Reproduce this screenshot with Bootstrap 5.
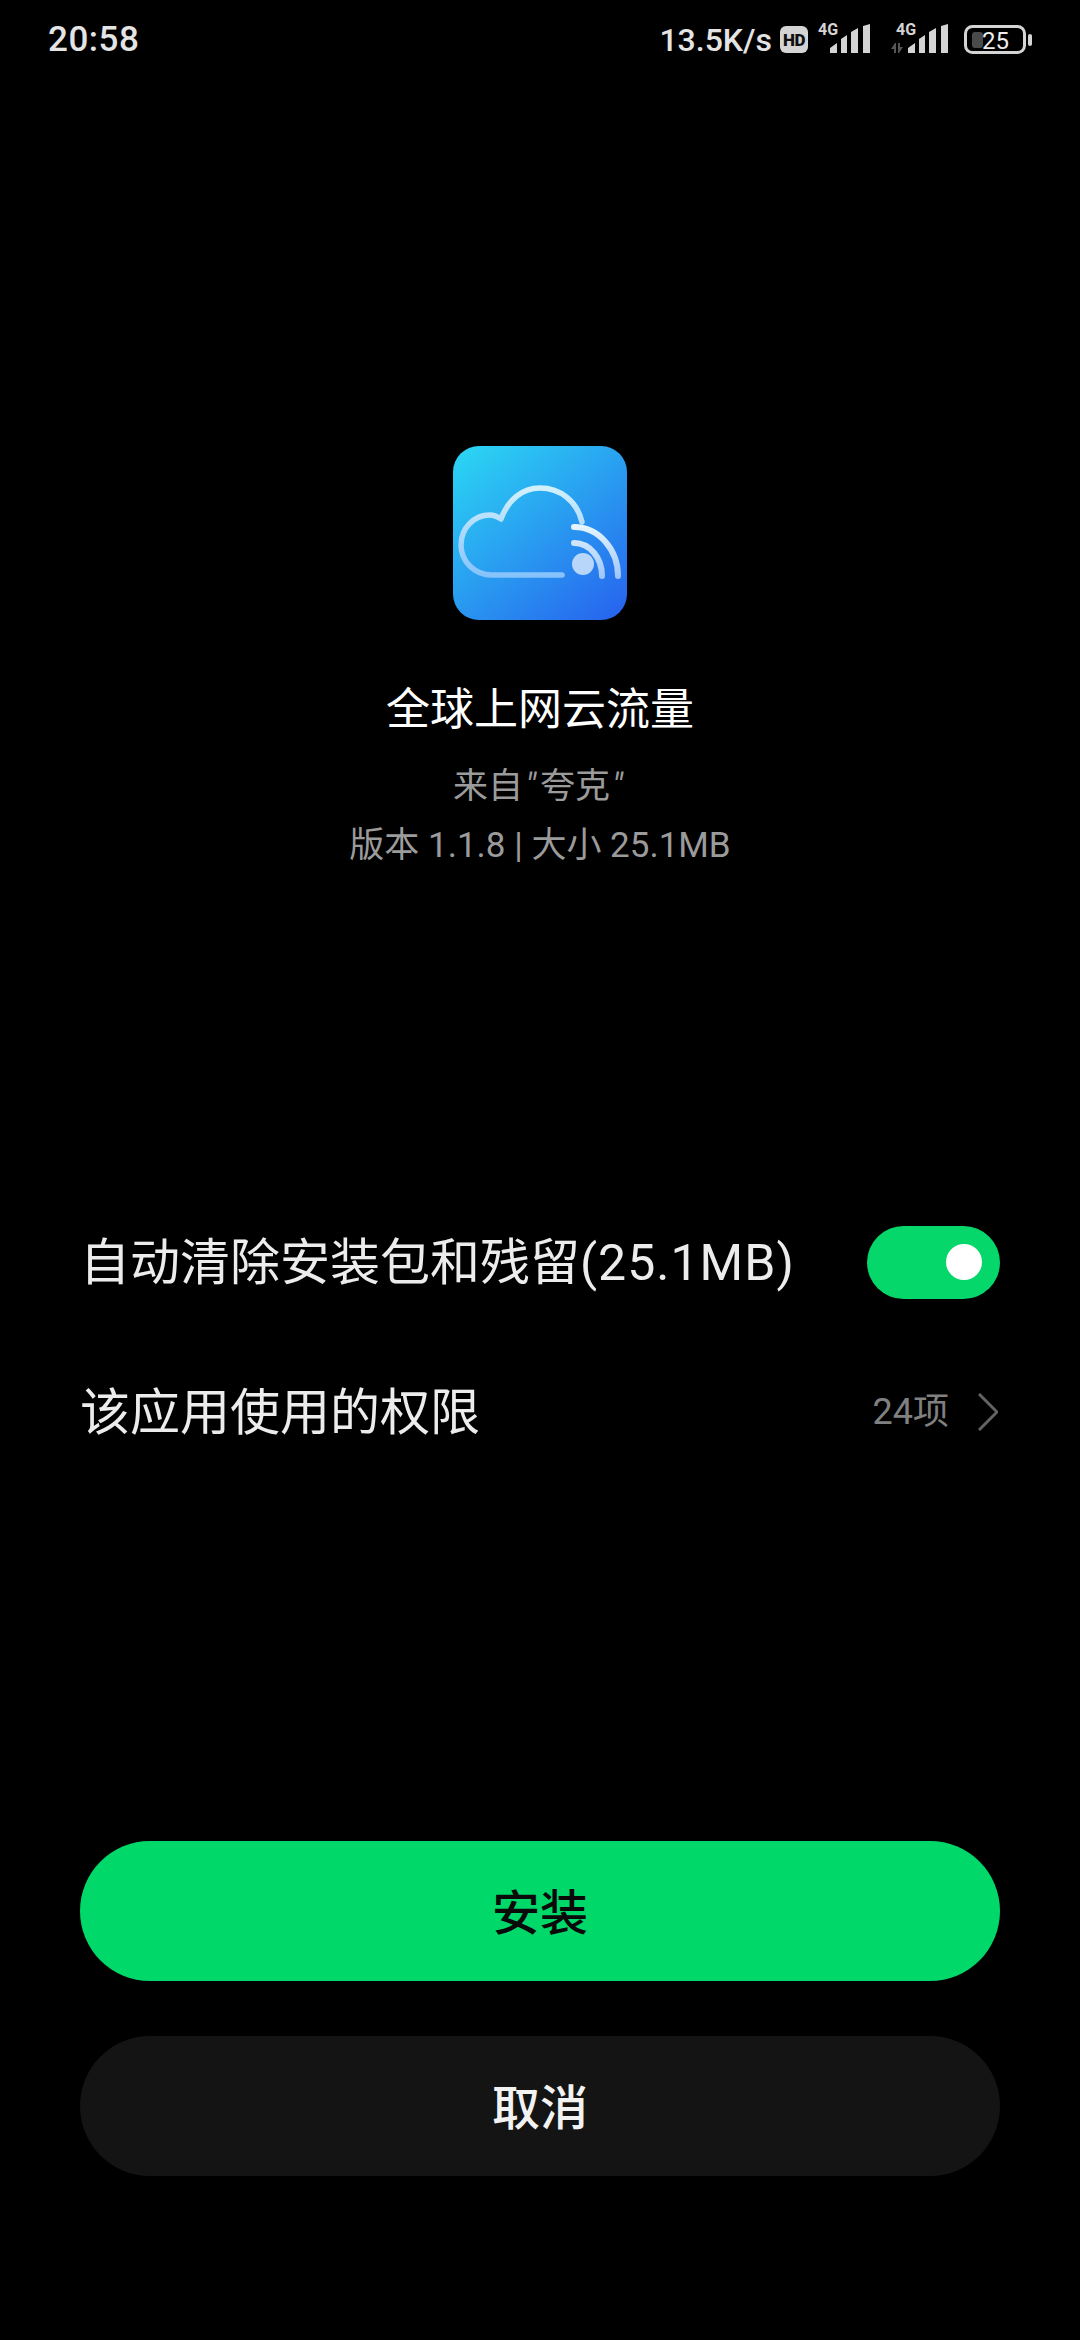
<!DOCTYPE html>
<html>
<head>
  <meta charset="utf-8">
  <title>安装</title>
  <link href="https://cdn.jsdelivr.net/npm/bootstrap@5.3.0/dist/css/bootstrap.min.css" rel="stylesheet">
  <style>
    html, body {
      background-color: #000;
    }
    body {
      width: 1080px;
      height: 2340px;
      overflow: hidden;
      font-family: Roboto, "Noto Sans CJK SC", sans-serif;
      color: #fff;
    }
    .status-bar {
      height: 80px;
      padding: 0 48px;
      color: #e4e4e4;
    }
    .status-time {
      font-size: 35px;
      font-weight: 500;
      letter-spacing: .5px;
    }
    .status-speed {
      font-size: 32px;
      font-weight: 500;
      margin-right: 8px;
    }
    .app-block {
      padding-top: 366px;
    }
    .app-icon {
      width: 174px;
      height: 174px;
      display: block;
    }
    .app-name {
      font-size: 44px;
      line-height: 60px;
      margin-top: 60px;
    }
    .app-meta {
      font-size: 35px;
      line-height: 59px;
      color: #9b9b9b;
      margin-top: 17px;
    }
    .meta-quote {
      padding: 0 4px 0 2px;
    }
    .option-list {
      margin-top: 312px;
      padding: 0 80px;
    }
    .option-row {
      height: 150px;
      font-size: 50px;
      color: #ececec;
    }
    .option-label {
      padding-top: 3px;
    }
    .option-latin {
      letter-spacing: 1px;
    }
    .switch-pill {
      width: 133px;
      height: 73px;
      border-radius: 37px;
      background-color: #05d76a;
      padding-right: 18px;
    }
    .switch-dot {
      width: 36px;
      height: 36px;
      border-radius: 50%;
      background-color: #fff;
    }
    .perm-count {
      font-size: 36px;
      color: #808080;
      margin-right: 29px;
    }
    .perm-arrow {
      margin-right: 2px;
    }
    .action-list {
      margin-top: 354px;
      padding: 0 80px;
      gap: 55px;
    }
    .action-btn {
      height: 140px;
      border-radius: 70px;
      font-size: 48px;
      border: 0;
      font-weight: 500;
      padding-top: 12px;
    }
    .action-install {
      background-color: #00d96a;
      color: #0a0a0a;
    }
    .action-cancel {
      background-color: #141414;
      color: #f2f2f2;
    }
  </style>
</head>
<body>

  <!-- Status bar -->
  <div class="status-bar d-flex align-items-center justify-content-between">
    <div class="status-time">20:58</div>
    <div class="d-flex align-items-center">
      <span class="status-speed">13.5K/s</span>
      <svg width="252" height="40" viewBox="780 20 252 40" fill="#d4d4d4">
        <rect x="780" y="26" width="28" height="27" rx="6"/>
        <text x="794" y="46" text-anchor="middle" font-family="Roboto" font-weight="900" font-size="17" letter-spacing="-.5" fill="#111">HD</text>
        <text x="828" y="35" text-anchor="middle" font-family="Roboto" font-weight="700" font-size="16">4G</text>
        <path d="M830 53v-5l7-5v10zM841 53V39l6-4v18zM851 53V32l7-4v25zM863 53V26l7-2v29z"/>
        <text x="906" y="35" text-anchor="middle" font-family="Roboto" font-weight="700" font-size="16">4G</text>
        <path d="M908 53v-5l7-5v10zM919 53V39l6-4v18zM929 53V32l7-4v25zM941 53V26l7-2v29z"/>
        <path d="M896 53V43h-1l-4 6h3v4zM898 43v10h1l4-6h-3v-4z" fill="#555"/>
        <rect x="965.500" y="26.500" width="59" height="26" rx="7" fill="none" stroke="#d4d4d4" stroke-width="3"/>
        <rect x="972" y="32" width="11" height="16" rx="3" fill="#4a4a4a"/>
        <rect x="1028" y="34" width="4" height="12" rx="2"/>
        <text x="995.500" y="49" text-anchor="middle" font-family="Roboto" font-size="24" fill="#eee">25</text>
      </svg>
    </div>
  </div>

  <!-- App info -->
  <div class="app-block text-center">
    <svg class="app-icon mx-auto" viewBox="0 0 174 174">
      <defs>
        <linearGradient id="iconBg" x1="0.1" y1="0" x2="0.9" y2="1">
          <stop offset="0" stop-color="#2bd3f3"/>
          <stop offset="1" stop-color="#2766ee"/>
        </linearGradient>
        <linearGradient id="iconLine" gradientUnits="userSpaceOnUse" x1="0" y1="42" x2="0" y2="132">
          <stop offset="0" stop-color="#d2f0fc"/>
          <stop offset="1" stop-color="#84c2fa"/>
        </linearGradient>
        <linearGradient id="iconWave" gradientUnits="userSpaceOnUse" x1="0" y1="80" x2="0" y2="132">
          <stop offset="0" stop-color="#e6f5fd"/>
          <stop offset="1" stop-color="#9cc6fa"/>
        </linearGradient>
      </defs>
      <rect width="174" height="174" rx="26" fill="url(#iconBg)"/>
      <path d="M109 129H39C21 129 8 115 8 99C8 82 21 69 37 69C41 69 45 71 48 73C55 54 69 42 87 42C107 42 124 55 129 76" fill="none" stroke="url(#iconLine)" stroke-width="5.500" stroke-linecap="round" stroke-linejoin="round"/>
      <path d="M121 81C146 81 165 104 165 130" fill="none" stroke="url(#iconWave)" stroke-width="6" stroke-linecap="round"/>
      <path d="M121 97C137 97 149 112 149 130" fill="none" stroke="url(#iconWave)" stroke-width="6" stroke-linecap="round"/>
      <circle cx="130" cy="118" r="11" fill="#b7d6fa"/>
    </svg>
    <div class="app-name">全球上网云流量</div>
    <div class="app-meta">来自<i class="meta-quote">"</i>夸克<i class="meta-quote">"</i><br>版本 1.1.8 | 大小 25.1MB</div>
  </div>

  <!-- Options -->
  <div class="option-list">
    <div class="option-row d-flex align-items-center justify-content-between">
      <span class="option-label">自动清除安装包和残留<span class="option-latin">(25.1MB)</span></span>
      <div class="switch-pill d-flex align-items-center justify-content-end"><div class="switch-dot"></div></div>
    </div>
    <div class="option-row d-flex align-items-center justify-content-between">
      <span class="option-label">该应用使用的权限</span>
      <div class="d-flex align-items-center">
        <span class="perm-count">24项</span>
        <svg class="perm-arrow" width="20" height="38" viewBox="0 0 20 38"><path d="M1 1l18 18L1 37" fill="none" stroke="#636363" stroke-width="3"/></svg>
      </div>
    </div>
  </div>

  <!-- Actions -->
  <div class="action-list d-flex flex-column">
    <button class="btn action-btn action-install">安装</button>
    <button class="btn action-btn action-cancel">取消</button>
  </div>

</body>
</html>
